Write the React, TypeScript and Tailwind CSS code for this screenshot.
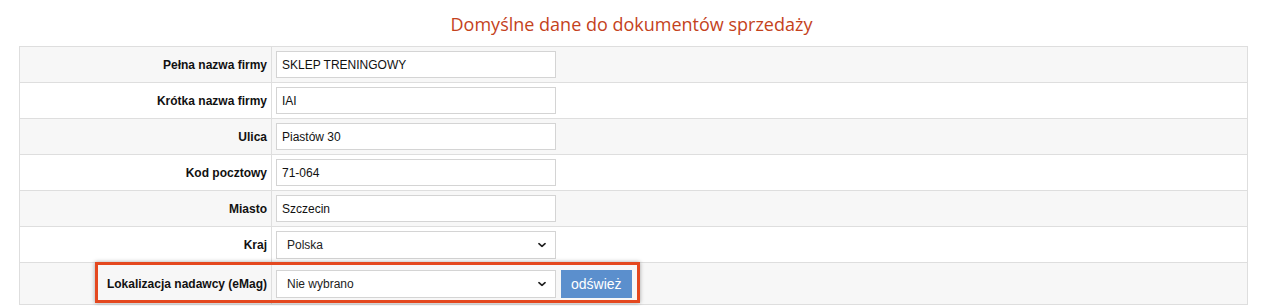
import React from 'react';

const rows: { label: string; value: string; kind: 'input' | 'select' }[] = [
  { label: 'Pełna nazwa firmy', value: 'SKLEP TRENINGOWY', kind: 'input' },
  { label: 'Krótka nazwa firmy', value: 'IAI', kind: 'input' },
  { label: 'Ulica', value: 'Piastów 30', kind: 'input' },
  { label: 'Kod pocztowy', value: '71-064', kind: 'input' },
  { label: 'Miasto', value: 'Szczecin', kind: 'input' },
  { label: 'Kraj', value: 'Polska', kind: 'select' },
];

const Chevron = () => (
  <svg viewBox="0 0 10 6" className="absolute right-[9px] top-1/2 -translate-y-1/2 w-[8px] h-[5px]">
    <path d="M1.2 1.2l3.8 3.6 3.8-3.6" fill="none" stroke="#222" strokeWidth="2" strokeLinecap="round" strokeLinejoin="round" />
  </svg>
);

const SelectBox = ({ value }: { value: string }) => (
  <div className="relative w-[280px] h-[28px] border border-[#d4d4d4] bg-white flex items-center pl-[10px] text-[12px] text-[#222]">
    {value}
    <Chevron />
  </div>
);

const TextBox = ({ value }: { value: string }) => (
  <div className="w-[280px] h-[27px] border border-[#d4d4d4] bg-white flex items-center pl-[5px] text-[12px] text-[#111]">
    {value}
  </div>
);

export default function App() {
  return (
    <div className="w-[1263px] h-[306px] overflow-hidden bg-white font-['Liberation_Sans',Arial,sans-serif]">
      <h1 className="h-[46px] pt-[12px] text-center text-[18px] leading-[24px] text-[#c4421c] font-['Open_Sans',sans-serif] font-normal">
        Domyślne dane do dokumentów sprzedaży
      </h1>
      <div className="relative ml-[19px] w-[1229px]">
        <table className="w-full border-collapse border border-[#dedede]">
          <tbody>
            {rows.map((r, i) => (
              <tr key={r.label} className={`h-[36px] border-t border-[#dedede] ${i % 2 === 0 ? 'bg-[#f7f7f7]' : 'bg-white'}`}>
                <td className="w-[252px] pr-[4px] text-right text-[12px] font-bold text-[#111] border-r border-[#dedede]">
                  {r.label}
                </td>
                <td className="pl-[4px]">
                  {r.kind === 'input' ? <TextBox value={r.value} /> : <SelectBox value={r.value} />}
                </td>
              </tr>
            ))}
            <tr className="h-[42px] border-t border-[#dedede] bg-[#f7f7f7]">
              <td className="w-[252px] pr-[4px] text-right text-[12px] font-bold text-[#111] border-r border-[#dedede]">
                Lokalizacja nadawcy (eMag)
              </td>
              <td className="pl-[4px]">
                <div className="flex items-center gap-[5px]">
                  <SelectBox value="Nie wybrano" />
                  <button className="h-[28px] px-[10px] bg-[#5b8fcd] text-white text-[14px] leading-none">odśwież</button>
                </div>
              </td>
            </tr>
          </tbody>
        </table>
        <div className="absolute left-[76px] top-[216px] w-[545px] h-[41px] border-[3px] border-[#e4481f] shadow-[0_0_4px_rgba(0,0,0,0.35)] pointer-events-none" />
      </div>
    </div>
  );
}
